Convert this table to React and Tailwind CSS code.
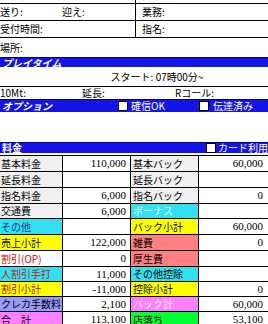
import React from "react";

const JP = "font-['MS_PGothic','Noto_Sans_CJK_JP',sans-serif]";
const NUM = "font-['Liberation_Serif','DejaVu_Serif',serif]";

const rows = [
  { h: "h-[16px]", l: "基本料金", lbg: "bg-[#f0f0f0]", lc: "text-black", v: "110,000", r: "基本バック", rbg: "bg-[#f0f0f0]", rc: "text-black", rv: "60,000" },
  { h: "h-[16px]", l: "延長料金", lbg: "bg-[#f0f0f0]", lc: "text-black", v: "", r: "延長バック", rbg: "bg-[#f0f0f0]", rc: "text-black", rv: "" },
  { h: "h-[16px]", l: "指名料金", lbg: "bg-[#f0f0f0]", lc: "text-black", v: "6,000", r: "指名バック", rbg: "bg-[#f0f0f0]", rc: "text-black", rv: "0" },
  { h: "h-[15px]", l: "交通費", lbg: "bg-[#f0f0f0]", lc: "text-black", v: "6,000", r: "ボーナス", rbg: "bg-[#33e0f0]", rc: "text-[#e8ffff]", rv: "" },
  { h: "h-[16px]", l: "その他", lbg: "bg-[#33e0f0]", lc: "text-[#1a3a8a]", v: "", r: "バック小計", rbg: "bg-[#ffff00]", rc: "text-black", rv: "60,000" },
  { h: "h-[16px]", l: "売上小計", lbg: "bg-[#ffff00]", lc: "text-black", v: "122,000", r: "雑費", rbg: "bg-[#ff8080]", rc: "text-black", rv: "0" },
  { h: "h-[16px]", l: "割引(OP)", lbg: "bg-white", lc: "text-[#e00000]", v: "0", r: "厚生費", rbg: "bg-[#ff8080]", rc: "text-black", rv: "" },
  { h: "h-[15px]", l: "人割引手打", lbg: "bg-[#33e0f0]", lc: "text-[#c02020]", v: "11,000", r: "その他控除", rbg: "bg-[#33e0f0]", rc: "text-black", rv: "" },
  { h: "h-[15px]", l: "割引小計", lbg: "bg-[#ffff00]", lc: "text-[#a01010]", v: "-11,000", r: "控除小計", rbg: "bg-[#ffff00]", rc: "text-black", rv: "0" },
  { h: "h-[15px]", l: "クレカ手数料", lbg: "bg-[#9999ff]", lc: "text-black", v: "2,100", r: "バック計", rbg: "bg-[#ff80ff]", rc: "text-[#ffe8ff]", rv: "60,000" },
  { h: "h-[16px]", l: "合　計", lbg: "bg-[#ff80ff]", lc: "text-black", v: "113,100", r: "店落ち", rbg: "bg-[#00ff33]", rc: "text-black", rv: "53,100" },
];

function Box() {
  return <span className="inline-block shrink-0 w-[10px] h-[10px] bg-white border border-black" />;
}

export default function App() {
  return (
    <div className={`w-[268px] h-[324px] overflow-hidden bg-white text-black text-[10px] leading-none whitespace-nowrap ${JP}`}>
      {/* top cut row */}
      <div className="-mt-[13px] h-[17px] grid grid-cols-[135px_1fr] border-b border-black">
        <div className="flex items-center pl-[1px]">利用区分:</div>
        <div className="flex items-center pl-[6px] border-l border-black">区分:</div>
      </div>
      <div className="h-[17px] grid grid-cols-[135px_1fr] border-b border-black">
        <div className="flex items-center">
          <span className="w-[62px]">送り:</span>
          <span>迎え:</span>
        </div>
        <div className="flex items-center pl-[6px] border-l border-black">業務:</div>
      </div>
      <div className="h-[17px] grid grid-cols-[135px_1fr] border-b border-black">
        <div className="flex items-center">受付時間:</div>
        <div className="flex items-center pl-[6px] border-l border-black">指名:</div>
      </div>
      <div className="h-[19px] flex items-center">場所:</div>

      <div className="h-[10px] bg-[#1414e6] border-t border-[#000080] flex items-center pl-[2px] text-white font-bold italic">
        プレイタイム
      </div>
      <div className="h-[20px] border-b border-black flex items-center justify-center pl-[46px]">
        スタート: 07時00分~
      </div>
      <div className="h-[12px] flex items-center">
        <span className="w-[82px]">10Mt:</span>
        <span className="w-[93px]">延長:</span>
        <span>Rコール:</span>
      </div>
      <div className="h-[13px] bg-[#1414e6] border-t border-[#000080] flex items-center text-white">
        <span className="w-[118px] pl-[2px] font-bold italic">オプション</span>
        <Box />
        <span className="ml-[3px] w-[68px]">確信OK</span>
        <Box />
        <span className="ml-[4px]">伝達済み</span>
      </div>

      <div className="h-[30px]" />

      <div className="h-[11px] bg-[#1414e6] border-t border-[#000080] flex items-center text-white">
        <span className="w-[208px] pl-[2px] font-bold">料金</span>
        <Box />
        <span className="ml-[2px]">カード利用</span>
      </div>
      <div className="h-[2px]" />

      <div className="border-t border-black">
        {rows.map((r, i) => (
          <div key={i} className={`${r.h} grid grid-cols-[63px_68px_68px_69px] border-b border-black overflow-hidden`}>
            <div className={`${r.lbg} ${r.lc} flex items-center pl-[1px] border-r border-black overflow-hidden`}>{r.l}</div>
            <div className={`bg-white flex items-center justify-end pr-[4px] border-r border-black ${NUM} text-[11px]`}>{r.v}</div>
            <div className={`${r.rbg} ${r.rc} flex items-center pl-[2px] border-r border-black overflow-hidden`}>{r.r}</div>
            <div className={`bg-white flex items-center justify-end pr-[5px] ${NUM} text-[11px]`}>{r.rv}</div>
          </div>
        ))}
      </div>
    </div>
  );
}
